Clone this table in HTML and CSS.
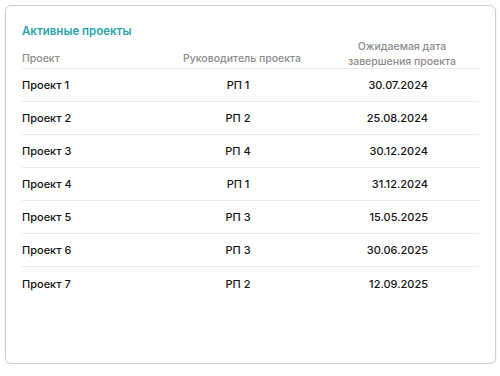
FILE: index.html
```html
<!DOCTYPE html>
<html lang="ru">
<head>
<meta charset="utf-8">
<link rel="stylesheet" href="styles.css">
</head>
<body>
<div class="card">
  <h2 class="title">Активные проекты</h2>
  <div class="table">
    <div class="row head">
      <div class="c1 hcell">Проект</div>
      <div class="c2 hcell">Руководитель проекта</div>
      <div class="c3 hcell two">Ожидаемая дата<br>завершения проекта</div>
    </div>
    <div class="row"><div class="c1">Проект 1</div><div class="c2">РП 1</div><div class="c3 date">30.07.2024</div></div>
    <div class="row"><div class="c1">Проект 2</div><div class="c2">РП 2</div><div class="c3 date">25.08.2024</div></div>
    <div class="row"><div class="c1">Проект 3</div><div class="c2">РП 4</div><div class="c3 date">30.12.2024</div></div>
    <div class="row"><div class="c1">Проект 4</div><div class="c2">РП 1</div><div class="c3 date">31.12.2024</div></div>
    <div class="row"><div class="c1">Проект 5</div><div class="c2">РП 3</div><div class="c3 date">15.05.2025</div></div>
    <div class="row"><div class="c1">Проект 6</div><div class="c2">РП 3</div><div class="c3 date">30.06.2025</div></div>
    <div class="row last"><div class="c1">Проект 7</div><div class="c2">РП 2</div><div class="c3 date">12.09.2025</div></div>
  </div>
</div>
</body>
</html>
```
FILE: styles.css
```css
* { box-sizing: border-box; }
html, body { margin: 0; padding: 0; background: #fff; }
body {
  font-family: Inter, "Noto Sans", sans-serif;
  font-size: 11px;
  color: #141414;
  padding: 5px 4px 0 5px;
}
.card {
  width: 491px;
  height: 359px;
  border: 1px solid #cfcfcf;
  border-radius: 6px;
  box-shadow: 0 1px 2px rgba(0,0,0,0.12);
  padding: 18px 16px 0 16px;
}
.title {
  margin: 0;
  font-size: 11.5px;
  line-height: 14px;
  font-weight: 600;
  color: #2aa6a8;
}
.table { margin-top: 1px; }
.row {
  display: grid;
  grid-template-columns: 138px 164px 156px;
  align-items: center;
  height: 33px;
  border-bottom: 1px solid #ececec;
  font-weight: 500;
}
.row.last { border-bottom: none; }
.row.head {
  height: 30px;
  align-items: end;
  color: #8c8c8c;
  font-weight: 500;
  font-size: 10.5px;
}
.hcell { line-height: 15px; padding-bottom: 3px; }
.hcell.two { padding-bottom: 0; }
.c1 { text-align: left; }
.c2 { text-align: center; }
.c3 { text-align: center; }
.row:not(.head) .c2 { padding-right: 8px; }
.date { text-align: right; padding-right: 52px; }
```
